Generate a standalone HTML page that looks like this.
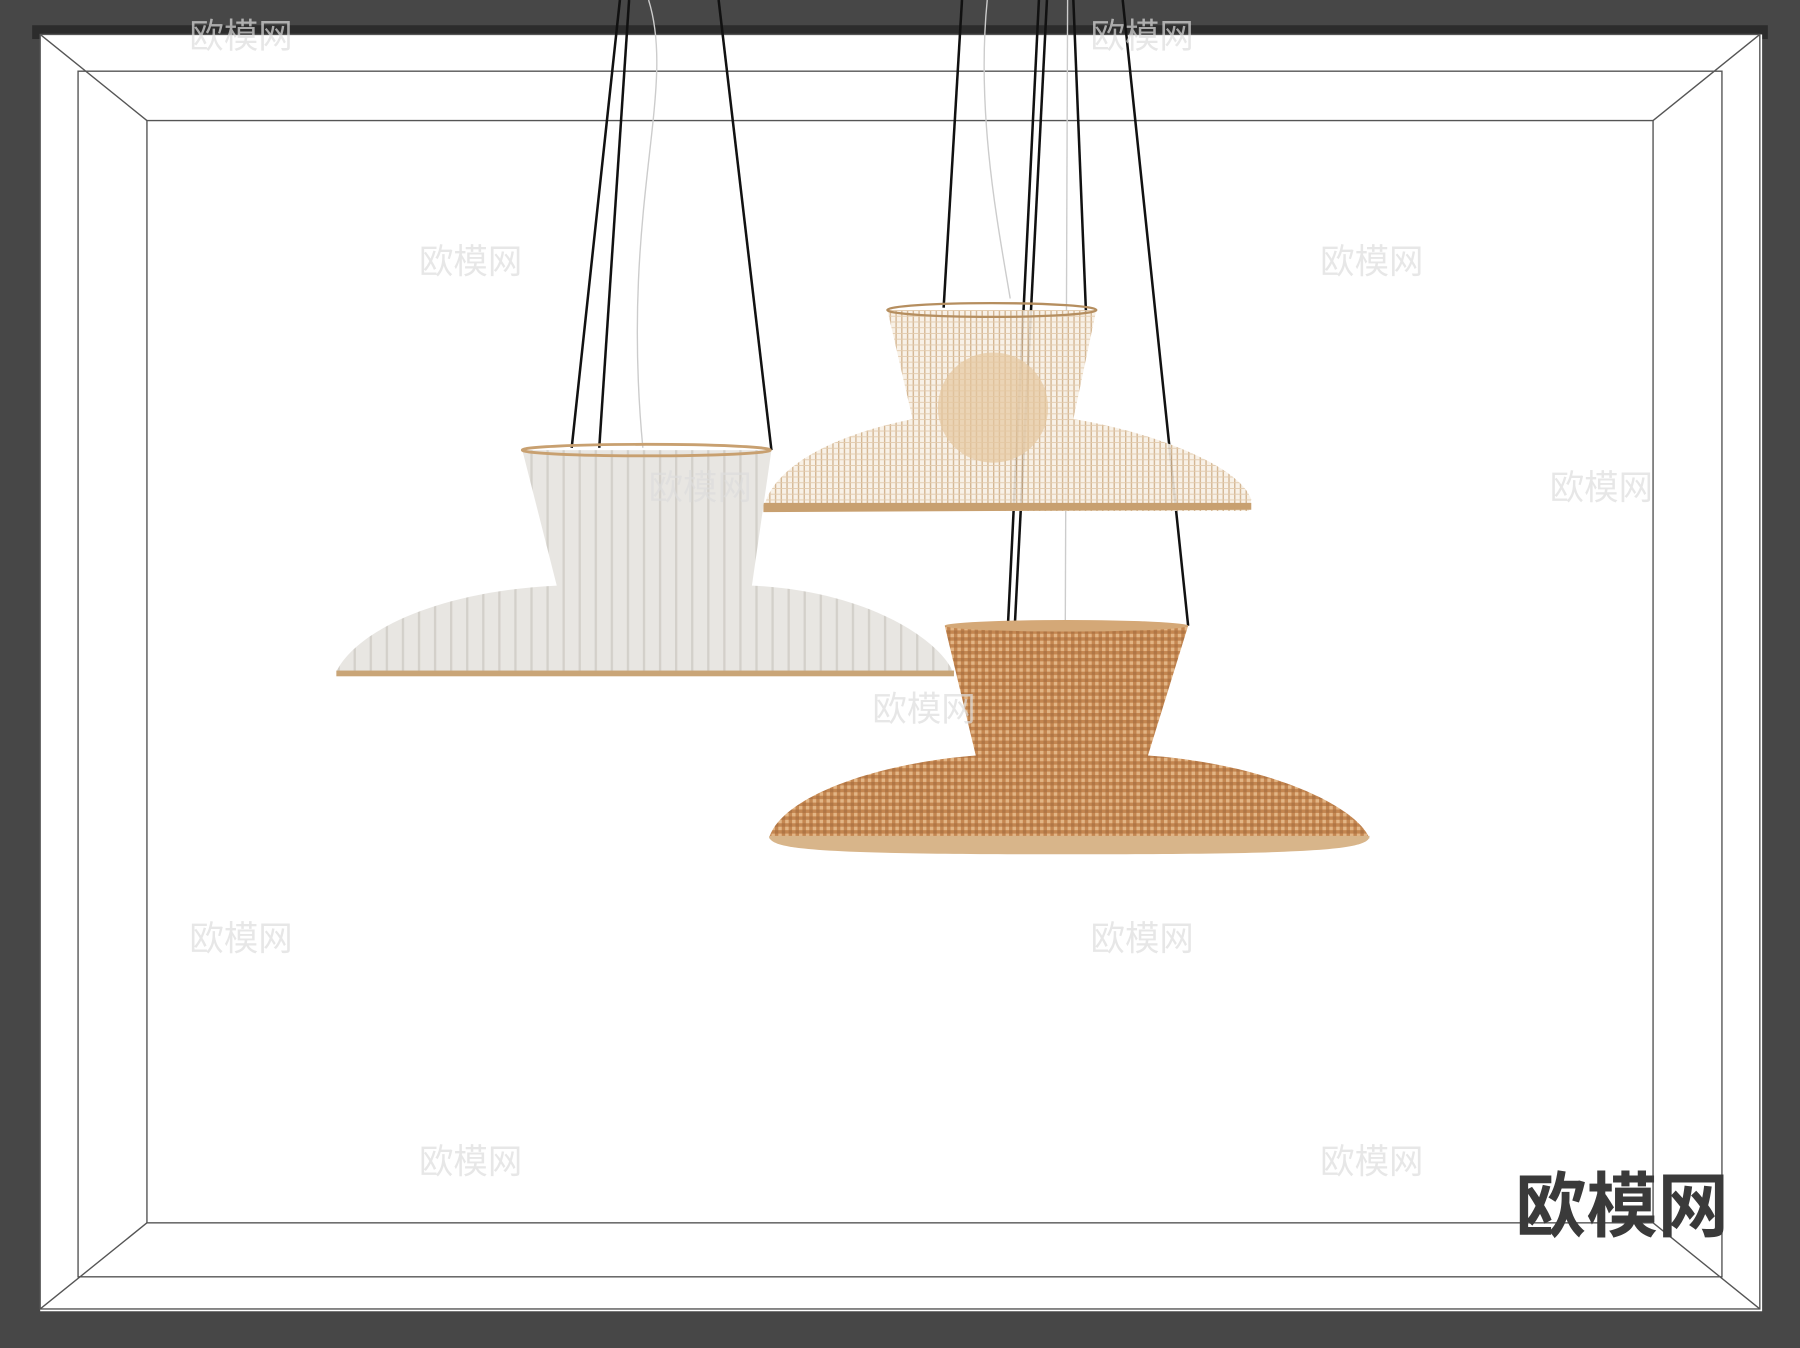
<!DOCTYPE html>
<html><head><meta charset="utf-8"><style>
html,body{margin:0;padding:0;background:#474747;}
svg{display:block}
</style></head><body>
<svg width="1800" height="1348" viewBox="0 0 1568 1174" preserveAspectRatio="none" xmlns="http://www.w3.org/2000/svg">
<defs>
<pattern id="stripes" width="14" height="10" patternUnits="userSpaceOnUse"><rect width="14" height="10" fill="#e8e6e2"/><rect width="2" height="10" fill="#d3d0ca"/></pattern>
<pattern id="weave" width="6" height="6" patternUnits="userSpaceOnUse"><rect width="6" height="6" fill="#c48650"/><rect width="3" height="3" fill="#e2b585"/><rect x="3" y="3" width="3" height="3" fill="#b07645"/></pattern>
<pattern id="cage" width="5" height="5" patternUnits="userSpaceOnUse"><rect width="5" height="5" fill="#f7efe4"/><rect width="1.2" height="5" fill="#cfae86"/><rect width="5" height="0.8" fill="#e0c6a6"/></pattern>
</defs>
<rect width="1568" height="1174" fill="#474747"/>
<rect x="28" y="22" width="1512" height="12" fill="#2c2c2c"/>
<rect x="35" y="30" width="1500" height="1112" fill="#fff"/>
<g fill="none" stroke="#555" stroke-width="1.2">
<rect x="35" y="30" width="1498" height="1110"/>
<rect x="68" y="62" width="1432" height="1050"/>
<rect x="128" y="105" width="1312" height="960"/>
<line x1="35" y1="30" x2="128" y2="105"/>
<line x1="1533" y1="30" x2="1440" y2="105"/>
<line x1="35" y1="1140" x2="128" y2="1065"/>
<line x1="1533" y1="1140" x2="1440" y2="1065"/>
</g>
<g stroke="#111" stroke-width="2.2">
<line x1="540" y1="0" x2="498" y2="390"/><line x1="548" y1="0" x2="522" y2="390"/><line x1="626" y1="0" x2="672" y2="392"/>
<line x1="838" y1="0" x2="822" y2="268"/><line x1="905" y1="0" x2="878" y2="545"/><line x1="912" y1="0" x2="884" y2="545"/>
<line x1="978" y1="0" x2="1035" y2="545"/><line x1="935" y1="0" x2="946" y2="272"/>
</g>
<g stroke="#ccc" stroke-width="1.2" fill="none"><path d="M565 0 C590 80 540 180 560 390"/><path d="M860 0 C850 100 870 200 880 260"/><path d="M930 0 L928 540"/></g>
<path d="M773 270 L955 270 L935 365 C1000 375 1080 405 1090 435 L1088 445 L665 445 C670 410 720 380 795 365 Z" fill="url(#cage)" opacity="0.9"/>
<ellipse cx="864" cy="270" rx="91" ry="6" fill="none" stroke="#b58e5f" stroke-width="2"/>
<circle cx="865" cy="355" r="48" fill="#e6c8a0" opacity="0.7"/>
<path d="M665 438 L1090 438 L1090 444 L665 446 Z" fill="#c8a070"/>
<path d="M455 392 L672 392 L655 510 C760 515 820 560 830 585 L293 585 C310 550 380 515 485 510 Z" fill="url(#stripes)"/>
<ellipse cx="563" cy="392" rx="108" ry="5" fill="none" stroke="#c8a070" stroke-width="2.5"/>
<rect x="293" y="584" width="538" height="5" fill="#c9a577"/>
<path d="M823 545 L1035 545 L1000 658 C1100 665 1180 700 1193 730 L670 730 C680 695 760 665 850 658 Z" fill="url(#weave)"/>
<ellipse cx="929" cy="545" rx="106" ry="5" fill="#d4a877"/>
<path d="M670 728 L1193 728 C1193 740 1150 744 931 744 C710 744 670 740 670 728 Z" fill="#d8b58a"/>
<text x="1320" y="1072" font-family="'Liberation Sans','Noto Sans CJK SC',sans-serif" font-size="62" font-weight="bold" fill="#3a3a3a">欧模网</text>
<g font-family="'Liberation Sans','Noto Sans CJK SC',sans-serif" font-size="30" fill="#ddd" opacity="0.7">
<text x="165" y="42">欧模网</text><text x="950" y="42">欧模网</text>
<text x="365" y="238">欧模网</text><text x="1150" y="238">欧模网</text>
<text x="565" y="435">欧模网</text><text x="1350" y="435">欧模网</text>
<text x="760" y="628">欧模网</text>
<text x="165" y="828">欧模网</text><text x="950" y="828">欧模网</text>
<text x="365" y="1022">欧模网</text><text x="1150" y="1022">欧模网</text>
</g>
</svg>
</body></html>
